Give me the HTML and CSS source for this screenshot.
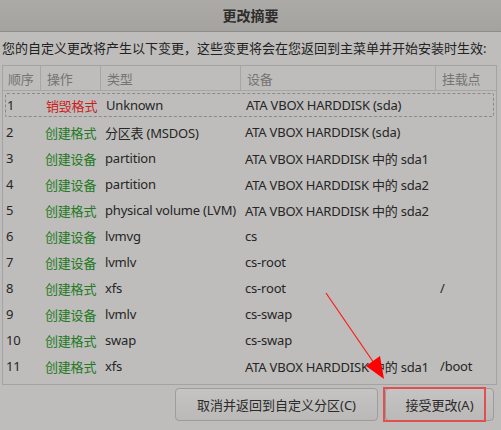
FILE: index.html
```html
<!DOCTYPE html>
<html>
<head>
<meta charset="utf-8">
<link rel="stylesheet" href="styles.css">
</head>
<body>
<div class="dialog">
  <div class="titlebar">更改摘要</div>
  <div class="intro">您的自定义更改将产生以下变更，这些变更将会在您返回到主菜单并开始安装时生效:</div>
  <div class="table">
    <div class="row head">
      <div class="c c1">顺序</div>
      <div class="c c2">操作</div>
      <div class="c c3">类型</div>
      <div class="c c4">设备</div>
      <div class="c c5">挂载点</div>
    </div>
    <div class="body">
      <div class="row focus"><div class="c c1">1</div><div class="c c2 red">销毁格式</div><div class="c c3">Unknown</div><div class="c c4">ATA VBOX HARDDISK (sda)</div><div class="c c5"></div></div>
      <div class="row"><div class="c c1">2</div><div class="c c2 green">创建格式</div><div class="c c3">分区表 (MSDOS)</div><div class="c c4">ATA VBOX HARDDISK (sda)</div><div class="c c5"></div></div>
      <div class="row"><div class="c c1">3</div><div class="c c2 green">创建设备</div><div class="c c3">partition</div><div class="c c4">ATA VBOX HARDDISK 中的 sda1</div><div class="c c5"></div></div>
      <div class="row"><div class="c c1">4</div><div class="c c2 green">创建设备</div><div class="c c3">partition</div><div class="c c4">ATA VBOX HARDDISK 中的 sda2</div><div class="c c5"></div></div>
      <div class="row"><div class="c c1">5</div><div class="c c2 green">创建格式</div><div class="c c3">physical volume (LVM)</div><div class="c c4">ATA VBOX HARDDISK 中的 sda2</div><div class="c c5"></div></div>
      <div class="row"><div class="c c1">6</div><div class="c c2 green">创建设备</div><div class="c c3">lvmvg</div><div class="c c4">cs</div><div class="c c5"></div></div>
      <div class="row"><div class="c c1">7</div><div class="c c2 green">创建设备</div><div class="c c3">lvmlv</div><div class="c c4">cs-root</div><div class="c c5"></div></div>
      <div class="row"><div class="c c1">8</div><div class="c c2 green">创建格式</div><div class="c c3">xfs</div><div class="c c4">cs-root</div><div class="c c5">/</div></div>
      <div class="row"><div class="c c1">9</div><div class="c c2 green">创建设备</div><div class="c c3">lvmlv</div><div class="c c4">cs-swap</div><div class="c c5"></div></div>
      <div class="row"><div class="c c1">10</div><div class="c c2 green">创建格式</div><div class="c c3">swap</div><div class="c c4">cs-swap</div><div class="c c5"></div></div>
      <div class="row"><div class="c c1">11</div><div class="c c2 green">创建格式</div><div class="c c3">xfs</div><div class="c c4">ATA VBOX HARDDISK 中的 sda1</div><div class="c c5">/boot</div></div>
    </div>
  </div>
  <div class="buttons">
    <button class="btn cancel">取消并返回到自定义分区(C)</button>
    <button class="btn accept">接受更改(A)</button>
  </div>
  <div class="highlight"></div>
  <svg class="arrow" width="501" height="430" viewBox="0 0 501 430">
    <line x1="326" y1="293" x2="376" y2="366" stroke="#ff1a1a" stroke-width="1.2"/>
    <polygon points="366,366 380,356 384,379" fill="#ff0000"/>
  </svg>
</div>
</body>
</html>
```

FILE: styles.css
```css
html, body {
  margin: 0;
  padding: 0;
}
body {
  width: 501px;
  height: 430px;
  background: #bebdbb;
  font-family: "Noto Sans", "Noto Sans CJK SC", sans-serif;
  font-size: 13px;
  color: #262626;
  overflow: hidden;
}
.dialog {
  position: relative;
  width: 501px;
  height: 430px;
}
.titlebar {
  height: 31px;
  line-height: 31px;
  text-align: center;
  font-weight: bold;
  font-size: 14px;
  color: #2e2d2b;
  background: linear-gradient(#acaaa7, #a5a39f);
  border-bottom: 1px solid #8e8c89;
}
.intro {
  padding: 7px 0 0 2px;
  height: 19px;
  line-height: 19px;
  white-space: nowrap;
  color: #222;
}
.table {
  margin: 7px 4px 0 2px;
  height: 320px;
  border: 1px solid #a3a3a3;
  box-sizing: border-box;
  display: flex;
  flex-direction: column;
}
.row {
  display: grid;
  grid-template-columns: 37px 60px 140px 195px 1fr;
  height: 26px;
  align-items: center;
}
.row.head {
  height: 24px;
  border-bottom: 1px solid #a6a6a6;
  color: #747474;
  align-items: stretch;
}
.head .c {
  display: flex;
  align-items: center;
  padding-left: 6px;
  border-left: 1px solid #a6a6a6;
}
.head .c1 {
  border-left: none;
  padding-left: 5px;
}
.body {
  padding-top: 1px;
}
.c {
  padding-left: 5px;
  white-space: nowrap;
  overflow: hidden;
  letter-spacing: -0.2px;
}
.c1 {
  padding-left: 3px;
}
.row.focus {
  margin: 0 2px;
  height: 22px;
  padding: 0;
  border: 1px dashed #8a8a8a;
  border-radius: 2px;
  margin-top: 1px;
  margin-bottom: 2px;
  grid-template-columns: 35px 60px 140px 195px 1fr;
}
.row.focus .c1 {
  padding-left: 1px;
}
.red {
  color: #cc1c1c;
}
.green {
  color: #237a23;
}
.buttons {
  display: flex;
  justify-content: flex-end;
  gap: 7px;
  padding: 3px 7px 0 0;
}
.btn {
  height: 33px;
  font-family: "Noto Sans", "Noto Sans CJK SC", sans-serif;
  font-size: 13px;
  color: #2a2a2a;
  background: linear-gradient(#c5c4c2, #bab9b7);
  border: 1px solid #9d9c9a;
  border-radius: 4px;
  padding: 0;
}
.cancel {
  width: 203px;
}
.accept {
  width: 109px;
}
.highlight {
  position: absolute;
  left: 383px;
  top: 387px;
  width: 99px;
  height: 31px;
  border: 2px solid #e05050;
}
.arrow {
  position: absolute;
  left: 0;
  top: 0;
  pointer-events: none;
}
```
